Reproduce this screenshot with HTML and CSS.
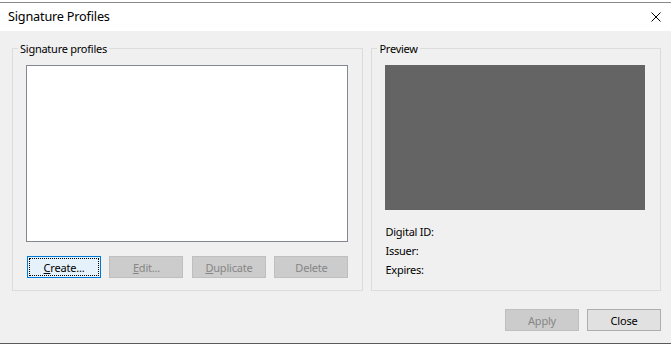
FILE: index.html
```html
<!DOCTYPE html>
<html lang="en">
<head>
    <meta charset="UTF-8">
    <meta name="viewport" content="width=device-width, initial-scale=1.0">
    <title>Signature Profiles</title>
    <link rel="stylesheet" href="styles.css">
</head>
<body>

    <div class="window">
        <!-- title bar -->
        <div class="titlebar">
            <span class="title">Signature Profiles</span>
            <button class="close-x" title="Close">
                <svg width="10" height="10" viewBox="0 0 10 10">
                    <path d="M0.5 0.5 L9.5 9.5 M9.5 0.5 L0.5 9.5" stroke="#000" stroke-width="1" fill="none"/>
                </svg>
            </button>
        </div>

        <div class="content">
            <div class="groups">
                <fieldset class="group group-profiles">
                    <legend>Signature profiles</legend>
                    <div class="listbox"></div>
                    <div class="button-row">
                        <button class="btn btn-focus"><span class="focus-rect"><u>C</u>reate...</span></button>
                        <button class="btn" disabled><u>E</u>dit...</button>
                        <button class="btn" disabled><u>D</u>uplicate</button>
                        <button class="btn" disabled>Delete</button>
                    </div>
                </fieldset>

                <fieldset class="group group-preview">
                    <legend>Preview</legend>
                    <div class="preview-box"></div>
                    <div class="info">
                        <div>Digital ID:</div>
                        <div>Issuer:</div>
                        <div>Expires:</div>
                    </div>
                </fieldset>
            </div>

            <div class="footer">
                <button class="btn" disabled>Apply</button>
                <button class="btn">Close</button>
            </div>
        </div>
    </div>

</body>
</html>
```

FILE: styles.css
```css
body {
    margin: 0;
    background-color: #ffffff;
    font-family: "Segoe UI", "Noto Sans", sans-serif;
    font-size: 11px;
    letter-spacing: -0.25px;
    color: #000;
    overflow: hidden;
}

.window {
    margin-top: 2px;
    height: 342px;
    box-sizing: border-box;
    border-top: 1px solid #8a8a8a;
    border-bottom: 1px solid #5a5a5a;
    display: flex;
    flex-direction: column;
}

.titlebar {
    height: 28px;
    background-color: #ffffff;
    display: flex;
    align-items: center;
    justify-content: space-between;
    padding: 0 10px 0 8px;
}

.title {
    font-size: 12.7px;
    letter-spacing: -0.2px;
    margin-top: -2px;
}

.close-x {
    background: none;
    border: none;
    padding: 0;
    width: 10px;
    height: 10px;
    display: flex;
}

.content {
    flex: 1;
    background-color: #f0f0f0;
    padding: 10px 10px 0 12px;
    display: flex;
    flex-direction: column;
}

.groups {
    display: flex;
    gap: 8px;
}

.group {
    margin: 0;
    border: 1px solid #dcdcdc;
    box-sizing: border-box;
    height: 250px;
    line-height: 15px;
}

.group legend {
    padding: 0 2px;
    margin-left: -8px;
    line-height: 15px;
}

.group-profiles {
    width: 352px;
    padding: 9px 14px 0 13px;
}

.group-preview {
    width: 290px;
    padding: 9px 15px 0 13px;
}

.listbox {
    height: 177px;
    box-sizing: border-box;
    background-color: #ffffff;
    border: 1px solid #828790;
}

.button-row {
    display: flex;
    justify-content: space-between;
    margin: 14px 0 0 1px;
}

.btn {
    width: 74px;
    height: 22px;
    box-sizing: border-box;
    padding: 0;
    font-family: inherit;
    font-size: 11px;
    letter-spacing: -0.2px;
    color: #000;
    background-color: #e1e1e1;
    border: 1px solid #adadad;
}

.btn:disabled {
    background-color: #cccccc;
    border-color: #bfbfbf;
    color: #868686;
}

.btn-focus {
    background-color: #e5f1fb;
    border-color: #0078d7;
    padding: 1px;
}

.focus-rect {
    display: flex;
    align-items: center;
    justify-content: center;
    height: 100%;
    box-sizing: border-box;
    border: 1px dotted #000;
}

.preview-box {
    height: 145px;
    background-color: #646464;
}

.info {
    margin-top: 14px;
    display: flex;
    flex-direction: column;
    gap: 4px;
}

.footer {
    display: flex;
    justify-content: flex-end;
    gap: 8px;
    margin-top: 18px;
}
```
